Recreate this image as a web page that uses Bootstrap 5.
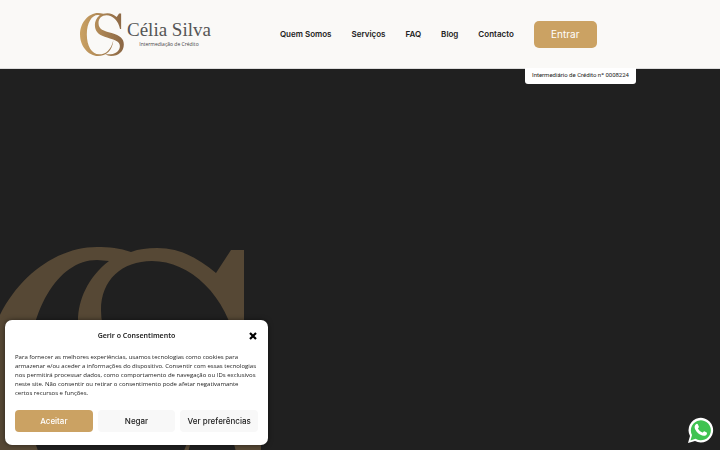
<!DOCTYPE html>
<html lang="pt">
<head>
<meta charset="utf-8">
<meta name="viewport" content="width=device-width, initial-scale=1">
<title>Célia Silva – Intermediação de Crédito</title>
<link rel="stylesheet" href="https://cdn.jsdelivr.net/npm/bootstrap@5.3.0/dist/css/bootstrap.min.css">
<style>
:root { --gold: #cba263; --paper: #faf9f7; --ink: #222; }
body { background: #202020; color: var(--ink); font-family: Inter, "Liberation Sans", sans-serif; font-size: 8px; }
.site-header { background: var(--paper); height: 69px; padding: 0 80px; border-bottom: 1px solid #ddd; }
.brand-mark { width: 44px; height: 43px; }
.brand-link { color: #444; line-height: 1; gap: 3px; }
.brand-name { font: 19px/20px "Liberation Serif", serif; color: #555; }
.brand-sub { font: 5px/8px "Open Sans", sans-serif; color: #444; }
.menu { gap: 20px; margin-left: 69px; }
.menu a { color: var(--ink); font-weight: 600; white-space: nowrap; }
.enter { width: 63px; height: 27px; background: var(--gold); color: #fff; font-size: 10px; border-radius: 5px; }
.licence { top: 100%; right: 84px; width: 111px; height: 16px; background: #fff; border-radius: 0 0 3px 3px; font: 6px/14px Roboto, sans-serif; color: #222; }
.hero { min-height: 381px; overflow: hidden; }
.watermark { left: -16px; top: 178px; width: 278px; height: 272px; }
.consent { left: 5px; bottom: 5px; width: 263px; padding: 11px 10px 13px; border-radius: 7px; background: #fff; font-family: "Open Sans", sans-serif; box-shadow: 0 0 5px rgba(0,0,0,.5); }
.consent h2 { font: 600 7px/10px "Noto Sans", sans-serif; }
.consent p { font-size: 6px; line-height: 9px; margin: 12px 0; }
.close-x { width: 8px; height: 8px; right: 1px; top: 1px; }
.choices { gap: 5px; }
.choice { flex: 1 1 0; height: 22px; border-radius: 4px; background: #f8f8f8; color: var(--ink); font: 500 8px/10px Inter, sans-serif; white-space: nowrap; }
.choice.accept { background: var(--gold); color: #fff; }
.chat { right: 6px; bottom: 6px; width: 28px; height: 28px; }
</style>
</head>
<body>
<svg width="0" height="0" class="position-absolute" aria-hidden="true">
  <symbol id="monogram" viewBox="-16 247 278 272">
    <path d="M131 252C120 248 109 247 97 247C40 247-16 306-16 383S40 519 97 519C150 519 189 484 195 417C180 479 150 508 105 508C58 508 27 455 27 383C27 310 58 260 97 260L109 261C88 277 78 300 78 321C78 360 95 381 140 397C194 415 236 421 236 456C236 482 216 505 178 508C163 509 151 508 143 505C154 515 167 519 180 519C228 519 261 489 261 446C261 409 238 390 184 374C133 359 101 352 101 310C101 280 122 261 152 261C190 261 227 295 237 348H244V250H231L216 273C198 258 180 248 157 248C147 248 139 249 131 252Z"/>
  </symbol>
</svg>
<header class="site-header position-relative d-flex align-items-center">
  <a class="brand-link d-flex align-items-center text-decoration-none" href="#">
    <svg class="brand-mark" aria-hidden="true">
      <defs><linearGradient id="bronze"><stop offset="0" stop-color="#cba263"/><stop offset="1" stop-color="#8a6644"/></linearGradient></defs>
      <use href="#monogram" fill="url(#bronze)"/>
    </svg>
    <span class="d-flex flex-column align-items-center">
      <span class="brand-name">Célia Silva</span>
      <span class="brand-sub">Intermediação de Crédito</span>
    </span>
  </a>
  <nav class="menu d-flex align-items-center" aria-label="Principal">
    <a class="text-decoration-none" href="#">Quem Somos</a>
    <a class="text-decoration-none" href="#">Serviços</a>
    <a class="text-decoration-none" href="#">FAQ</a>
    <a class="text-decoration-none" href="#">Blog</a>
    <a class="text-decoration-none" href="#">Contacto</a>
    <button type="button" class="enter btn border-0 p-0">Entrar</button>
  </nav>
  <div class="licence position-absolute text-center text-nowrap">Intermediário de Crédito nº 0008224</div>
</header>
<main class="hero position-relative">
  <svg class="watermark position-absolute" aria-hidden="true"><use href="#monogram" fill="#564835"/></svg>
</main>
<section class="consent position-fixed" role="dialog" aria-labelledby="consent-title">
  <div class="position-relative">
    <h2 id="consent-title" class="text-center m-0">Gerir o Consentimento</h2>
    <button type="button" class="close-x position-absolute btn border-0 p-0 d-flex" aria-label="Fechar">
      <svg viewBox="0 0 8 8" width="8" height="8"><path d="M1 1L7 7M7 1L1 7" stroke="#000" stroke-width="2.2"/></svg>
    </button>
  </div>
  <p>Para fornecer as melhores experiências, usamos tecnologias como cookies para armazenar e/ou aceder a informações do dispositivo. Consentir com essas tecnologias nos permitirá processar dados, como comportamento de navegação ou IDs exclusivos neste site. Não consentir ou retirar o consentimento pode afetar negativamante certos&nbsp;recursos e funções.</p>
  <div class="choices d-flex">
    <button type="button" class="choice accept btn border-0 p-0">Aceitar</button>
    <button type="button" class="choice btn border-0 p-0">Negar</button>
    <button type="button" class="choice btn border-0 p-0">Ver preferências</button>
  </div>
</section>
<a class="chat position-fixed d-flex" href="#" aria-label="WhatsApp">
  <svg viewBox="0 0 28 28" width="28" height="28">
    <path d="M2 27L4 20A12.3 12.3 0 1 1 9 25Z" fill="#fff"/>
    <path d="M4.500 24.500L6 19A10 10 0 1 1 9.500 22.800Z" fill="#3fc351"/>
    <path d="M9.700 8.500C10.400 7.700 11.500 7.600 11.900 8.400L12.900 10.800C13.100 11.500 12 12.200 11.900 12.600C12.900 14.500 14.400 15.800 16.400 16.600C17 16.500 17.700 15 18.300 15.200L20.700 16.400C21.400 16.900 20.800 18.600 20 19.200C17.500 20.900 13.800 18.900 11.700 16.800C9.400 14.500 7.300 10.900 9.700 8.500Z" fill="#fff"/>
  </svg>
</a>
<script src="https://cdn.jsdelivr.net/npm/bootstrap@5.3.0/dist/js/bootstrap.bundle.min.js"></script>
</body>
</html>
